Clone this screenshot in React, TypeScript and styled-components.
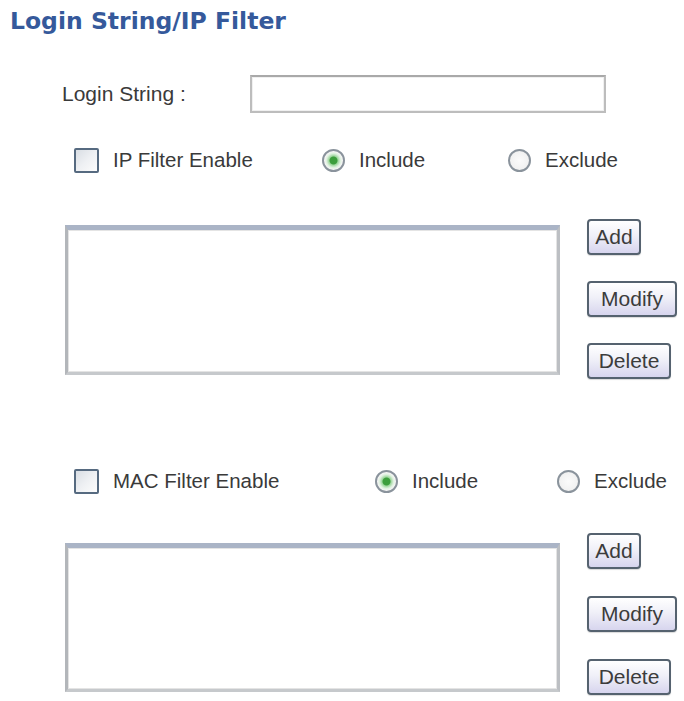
import React from "react";
import styled, { createGlobalStyle } from "styled-components";

const GlobalStyle = createGlobalStyle`
  html, body {
    margin: 0;
    padding: 0;
    background: #ffffff;
  }
  body {
    font-family: "Liberation Sans", Arial, sans-serif;
    color: #3a3a3a;
  }
`;

const Page = styled.div`
  width: 684px;
  height: 701px;
  overflow: hidden;
  display: flex;
  flex-direction: column;
`;

const Title = styled.h1`
  margin: 8px 0 0 10px;
  font-family: "DejaVu Sans", Verdana, sans-serif;
  font-weight: bold;
  font-size: 23.5px;
  line-height: 27px;
  color: #35599b;
`;

const LoginRow = styled.div`
  margin-top: 40px;
  padding-left: 62px;
  display: flex;
  align-items: center;
`;

const LoginLabel = styled.label`
  width: 188px;
  font-size: 21px;
`;

const TextBox = styled.input`
  width: 356px;
  height: 38px;
  box-sizing: border-box;
  margin: 0;
  border: 2px solid #bdbdbd;
  border-top-color: #a9a9a9;
  background: #ffffff;
  box-shadow: inset 0 0 0 1px #f0f0f0;
  outline: none;
`;

const FilterRow = styled.div<{ $top: number; $cols: string }>`
  margin-top: ${(p) => p.$top}px;
  padding-left: 74px;
  height: 26px;
  display: grid;
  grid-template-columns: ${(p) => p.$cols};
  align-items: center;
`;

const Option = styled.label`
  display: flex;
  align-items: center;
  gap: 14px;
  font-size: 20.5px;
  white-space: nowrap;
`;

const CheckBox = styled.span`
  width: 25px;
  height: 25px;
  box-sizing: border-box;
  border: 2px solid #566a80;
  border-radius: 2px;
  background: linear-gradient(135deg, #d9dee4 0%, #eef0f3 50%, #fcfcfc 100%);
`;

const Radio = styled.span<{ $on?: boolean }>`
  width: 23px;
  height: 23px;
  box-sizing: border-box;
  border-radius: 50%;
  border: 2px solid #8a939c;
  background: ${(p) =>
    p.$on
      ? "radial-gradient(circle, #3c9e3c 0 3.5px, #9cd69c 4.5px, #dff1df 7px, #f6f6f6 9px)"
      : "radial-gradient(circle, #fbfbfb 0%, #ededed 100%)"};
`;

const ListSection = styled.div<{ $top: number }>`
  margin-top: ${(p) => p.$top}px;
  padding-left: 65px;
  display: flex;
  align-items: flex-start;
  gap: 27px;
`;

const ListBox = styled.div<{ $top: number; $height: number }>`
  margin-top: ${(p) => p.$top}px;
  width: 495px;
  height: ${(p) => p.$height}px;
  box-sizing: border-box;
  border: 3px solid #b3b6ba;
  border-top: 5px solid #aab4c6;
  border-right-color: #bcbfc3;
  border-bottom-color: #c6c9cc;
  box-shadow: inset 0 0 0 1px #e4e4e4;
  background: #ffffff;
`;

const ButtonColumn = styled.div<{ $gap: number }>`
  display: flex;
  flex-direction: column;
  align-items: flex-start;
  gap: ${(p) => p.$gap}px;
`;

const ActionButton = styled.button<{ $w: number }>`
  width: ${(p) => p.$w}px;
  height: 36px;
  box-sizing: border-box;
  padding: 0;
  border: 2px solid #55626f;
  border-radius: 4px;
  background: linear-gradient(to bottom, #ffffff 0%, #f0f0f8 45%, #d7d5ee 100%);
  box-shadow: 0 1px 1px rgba(0, 0, 0, 0.15);
  font-family: "Liberation Sans", Arial, sans-serif;
  font-size: 21px;
  color: #3c3c3c;
  text-align: center;
`;

const buttons = [
  { label: "Add", w: 54 },
  { label: "Modify", w: 90 },
  { label: "Delete", w: 84 },
];

const filters = [
  {
    label: "IP Filter Enable",
    rowTop: 34,
    cols: "248px 186px auto",
    sectionTop: 46,
    listTop: 6,
    listHeight: 150,
    gap: 26,
  },
  {
    label: "MAC Filter Enable",
    rowTop: 89,
    cols: "301px 182px auto",
    sectionTop: 39,
    listTop: 10,
    listHeight: 149,
    gap: 27,
  },
];

export default function App() {
  return (
    <Page>
      <GlobalStyle />
      <Title>Login String/IP Filter</Title>
      <LoginRow>
        <LoginLabel>Login String :</LoginLabel>
        <TextBox type="text" />
      </LoginRow>
      {filters.map((f) => (
        <React.Fragment key={f.label}>
          <FilterRow $top={f.rowTop} $cols={f.cols}>
            <Option>
              <CheckBox />
              {f.label}
            </Option>
            <Option>
              <Radio $on />
              Include
            </Option>
            <Option>
              <Radio />
              Exclude
            </Option>
          </FilterRow>
          <ListSection $top={f.sectionTop}>
            <ListBox $top={f.listTop} $height={f.listHeight} />
            <ButtonColumn $gap={f.gap}>
              {buttons.map((b) => (
                <ActionButton key={b.label} $w={b.w}>
                  {b.label}
                </ActionButton>
              ))}
            </ButtonColumn>
          </ListSection>
        </React.Fragment>
      ))}
    </Page>
  );
}
